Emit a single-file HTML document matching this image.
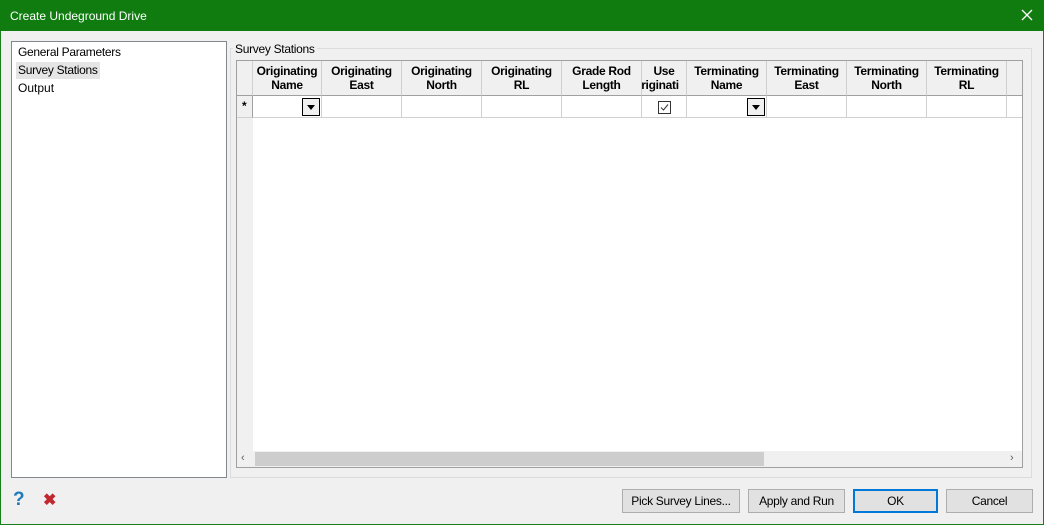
<!DOCTYPE html>
<html><head><style>
*{box-sizing:border-box;margin:0;padding:0}
body{width:1044px;height:525px;overflow:hidden;background:#f0f0f0;font-family:"Liberation Sans",sans-serif;font-size:12px;color:#000;position:relative}
.a{position:absolute}
.win{left:0;top:0;width:1044px;height:525px;border:1px solid #1a7f1a}
.title{left:0;top:0;width:1044px;height:31px;background:#107c10;color:#fff;font-size:12px;padding:9px 0 0 10px}
.hd{position:absolute;top:61px;height:35px;border-right:1px solid #d0d0d0;border-bottom:1px solid #a0a0a0;background:#f0f0f0;font-weight:bold;text-align:center;line-height:14px;padding-top:3px;overflow:hidden;white-space:nowrap;letter-spacing:-0.3px}
.cl{position:absolute;top:96px;height:22px;border-right:1px solid #d0d0d0;border-bottom:1px solid #d0d0d0;background:#fff}
.dd{position:absolute;right:1px;top:2px;width:18px;height:18px;border:1px solid #000;background:#f0f0f0}
.dd:after{content:"";position:absolute;left:4px;top:6px;border-left:4px solid transparent;border-right:4px solid transparent;border-top:5px solid #000}
.btn{position:absolute;top:489px;height:24px;border:1px solid #adadad;background:#e1e1e1;text-align:center;line-height:22px;letter-spacing:-0.3px}
</style></head><body>
<div class="a win"></div>
<div class="a title">Create Undeground Drive</div>
<svg class="a" style="left:1021px;top:9px" width="12" height="12"><path d="M1 1L11 11M11 1L1 11" stroke="#fff" stroke-width="1.3"/></svg>
<div class="a" style="left:11px;top:41px;width:216px;height:437px;background:#fff;border:1px solid #828790"></div>
<div class="a" style="left:16px;top:62px;width:84px;height:17px;background:#e5e5e5"></div>
<div class="a" style="left:18px;top:45px;letter-spacing:-0.3px">General Parameters</div>
<div class="a" style="left:18px;top:63px;letter-spacing:-0.3px">Survey Stations</div>
<div class="a" style="left:18px;top:81px">Output</div>
<div class="a" style="left:230px;top:48px;width:802px;height:430px;border:1px solid #dcdcdc"></div>
<div class="a" style="left:233px;top:42px;background:#f0f0f0;padding:0 2px;letter-spacing:-0.3px">Survey Stations</div>
<div class="a" style="left:236px;top:60px;width:787px;height:408px;background:#fff;border:1px solid #a0a0a0"></div>
<div class="a" style="left:237px;top:61px;width:16px;height:390px;background:#f0f0f0"></div>
<div class="hd" style="left:237px;width:16px"></div>
<div class="cl" style="left:237px;width:16px;background:#f0f0f0;border-right:1px solid #a0a0a0;font-weight:bold;padding:3px 0 0 5px">*</div>
<div class="hd" style="left:253px;width:69px">Originating<br>Name</div>
<div class="hd" style="left:322px;width:80px">Originating<br>East</div>
<div class="hd" style="left:402px;width:80px">Originating<br>North</div>
<div class="hd" style="left:482px;width:80px">Originating<br>RL</div>
<div class="hd" style="left:562px;width:80px">Grade Rod<br>Length</div>
<div class="hd" style="left:642px;width:45px">Use<br><span style="margin-left:-8px">riginati</span></div>
<div class="hd" style="left:687px;width:80px">Terminating<br>Name</div>
<div class="hd" style="left:767px;width:80px">Terminating<br>East</div>
<div class="hd" style="left:847px;width:80px">Terminating<br>North</div>
<div class="hd" style="left:927px;width:80px">Terminating<br>RL</div>
<div class="hd" style="left:1007px;width:15px;border-right:none"></div>
<div class="cl" style="left:253px;width:69px"><div class="dd"></div></div>
<div class="cl" style="left:322px;width:80px"></div>
<div class="cl" style="left:402px;width:80px"></div>
<div class="cl" style="left:482px;width:80px"></div>
<div class="cl" style="left:562px;width:80px"></div>
<div class="cl" style="left:642px;width:45px"><svg style="position:absolute;left:16px;top:5px" width="13" height="13"><rect x=".5" y=".5" width="12" height="12" fill="#fff" stroke="#333"/><path d="M3 6.5L5.5 9L10 3.5" fill="none" stroke="#333"/></svg></div>
<div class="cl" style="left:687px;width:80px"><div class="dd"></div></div>
<div class="cl" style="left:767px;width:80px"></div>
<div class="cl" style="left:847px;width:80px"></div>
<div class="cl" style="left:927px;width:80px"></div>
<div class="cl" style="left:1007px;width:15px;border-right:none"></div>
<div class="a" style="left:237px;top:451px;width:785px;height:16px;background:#f0f0f0"></div>
<div class="a" style="left:255px;top:452px;width:509px;height:14px;background:#cdcdcd"></div>
<div class="a" style="left:241px;top:452px;color:#606060;font-size:11px">‹</div>
<div class="a" style="left:1010px;top:452px;color:#606060;font-size:11px">›</div>
<div class="a" style="left:13px;top:489px;color:#1e7ab8;font-weight:bold;font-size:19px">?</div>
<div class="a" style="left:43px;top:490px;color:#c0282d;font-weight:bold;font-size:16px">✖</div>
<div class="btn" style="left:622px;width:118px">Pick Survey Lines...</div>
<div class="btn" style="left:748px;width:97px">Apply and Run</div>
<div class="btn" style="left:853px;width:85px;border:2px solid #0078d7;line-height:20px">OK</div>
<div class="btn" style="left:946px;width:87px">Cancel</div>
</body></html>
